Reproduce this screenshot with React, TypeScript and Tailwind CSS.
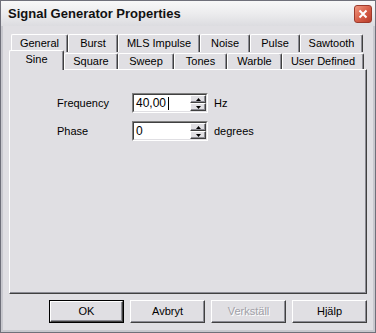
const row1 = [
  { label: "General", w: 57 },
  { label: "Burst", w: 50 },
  { label: "MLS Impulse", w: 82 },
  { label: "Noise", w: 50 },
  { label: "Pulse", w: 50 },
  { label: "Sawtooth", w: 63 },
];

const row2 = [
  { label: "Square", w: 54 },
  { label: "Sweep", w: 56 },
  { label: "Tones", w: 53 },
  { label: "Warble", w: 55 },
  { label: "User Defined", w: 82 },
];

const font = { fontFamily: '"Liberation Sans", Arial, sans-serif' };

function Tab({ label, w, h = 18 }: { label: string; w: number; h?: number }) {
  return (
    <div
      className="flex shrink-0 items-center justify-center rounded-t-[2px] border-t border-l border-r border-t-white border-l-white border-r-[#404040] bg-[#e0dfe3] shadow-[inset_-1px_0_0_#8c8c94] text-[11px] text-black"
      style={{ width: w, height: h }}
    >
      <span className="-mt-[1px]">{label}</span>
    </div>
  );
}

function SpinEdit({ value, caret }: { value: string; caret?: boolean }) {
  return (
    <div className="flex h-[20px] w-[76px] border-t border-l border-t-[#808080] border-l-[#808080] border-b border-r border-b-white border-r-white">
      <div className="flex flex-1 border-t border-l border-t-[#404040] border-l-[#404040] border-b border-r border-b-[#e0dfe3] border-r-[#e0dfe3] bg-white">
        <div className="flex flex-1 items-center pl-[2px] text-[12px] text-black">
          <span>{value}</span>
          {caret && <span className="ml-[2px] h-[13px] w-px bg-black" />}
        </div>
        <div className="flex w-[16px] flex-col">
          <SpinHalf up />
          <SpinHalf />
        </div>
      </div>
    </div>
  );
}

function SpinHalf({ up }: { up?: boolean }) {
  return (
    <div className="flex flex-1 items-center justify-center border-t border-l border-t-white border-l-white border-b border-r border-b-[#404040] border-r-[#404040] bg-[#e0dfe3] shadow-[inset_-1px_-1px_0_#8c8c94]">
      <svg width="5" height="3" viewBox="0 0 5 3">
        {up ? <path d="M2.5 0 L5 3 L0 3 Z" fill="#000" /> : <path d="M0 0 L5 0 L2.5 3 Z" fill="#000" />}
      </svg>
    </div>
  );
}

function Button({ label, def, disabled }: { label: string; def?: boolean; disabled?: boolean }) {
  return (
    <div className={`h-[23px] w-[75px] ${def ? "border border-black" : ""}`}>
      <div
        className={`flex h-full w-full items-center justify-center border-t border-l border-t-white border-l-white border-b border-r border-b-[#404040] border-r-[#404040] bg-[#e0dfe3] shadow-[inset_-1px_-1px_0_#8c8c94] text-[11px] ${
          disabled ? "text-[#a0a0a8] [text-shadow:1px_1px_0_#fff]" : "text-black"
        }`}
      >
        {label}
      </div>
    </div>
  );
}

export default function App() {
  return (
    <div className="h-[333px] w-[376px] overflow-hidden bg-white" style={font}>
      <div className="flex h-full w-full flex-col border border-[#6f707a] bg-[#e0dfe3]">
        {/* Title bar */}
        <div className="flex h-[25px] shrink-0 items-center justify-between bg-gradient-to-b from-[#f8f8f8] via-[#ececee] to-[#dcdce0] pl-[7px] pr-[3px]">
          <span className="text-[13px] font-bold text-[#111]">Signal Generator Properties</span>
          <div className="flex h-[18px] w-[18px] items-center justify-center rounded-[3px] border border-[#9c3a2c] bg-gradient-to-br from-[#f09880] via-[#d8604a] to-[#b83c2a]">
            <svg width="10" height="10" viewBox="0 0 10 10">
              <path d="M1.5 1.5 L8.5 8.5 M8.5 1.5 L1.5 8.5" stroke="#fff" strokeWidth="2" />
            </svg>
          </div>
        </div>

        {/* Body */}
        <div className="flex flex-1 flex-col border-x-2 border-b-2 border-x-[#c8c8ce] border-b-[#c8c8ce] px-[6px] pt-[8px]">
          {/* Tabs */}
          <div className="flex pl-[2px]">
            {row1.map((t) => (
              <Tab key={t.label} label={t.label} w={t.w} />
            ))}
          </div>
          <div className="relative z-10 flex h-[17px] items-end">
            <div className="relative -mb-[1px] flex h-[20px] w-[55px] items-center justify-center rounded-t-[2px] border-t border-l border-r border-t-white border-l-white border-r-[#404040] bg-[#e0dfe3] shadow-[inset_-1px_0_0_#8c8c94] text-[11px] text-black">
              <span className="-mt-[3px]">Sine</span>
            </div>
            {row2.map((t) => (
              <Tab key={t.label} label={t.label} w={t.w} h={16} />
            ))}
          </div>

          {/* Panel */}
          <div className="h-[225px] w-[358px] border-t border-l border-t-white border-l-white border-b border-r border-b-[#404040] border-r-[#404040] shadow-[inset_-1px_-1px_0_#8c8c94]">
            <div className="flex flex-col gap-[8px] pl-[47px] pt-[23px] text-[11px] text-black">
              <div className="flex items-center">
                <span className="w-[75px]">Frequency</span>
                <SpinEdit value="40,00" caret />
                <span className="ml-[6px]">Hz</span>
              </div>
              <div className="flex items-center">
                <span className="w-[75px]">Phase</span>
                <SpinEdit value="0" />
                <span className="ml-[6px]">degrees</span>
              </div>
            </div>
          </div>

          {/* Buttons */}
          <div className="mt-[6px] flex justify-end gap-[6px]">
            <Button label="OK" def />
            <Button label="Avbryt" />
            <Button label="Verkställ" disabled />
            <Button label="Hjälp" />
          </div>
        </div>
      </div>
    </div>
  );
}
